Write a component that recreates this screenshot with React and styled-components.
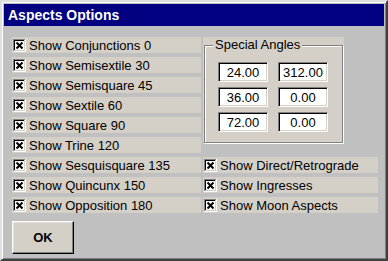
import React from 'react';
import styled, { createGlobalStyle } from 'styled-components';

const GlobalStyle = createGlobalStyle`
  html, body {
    margin: 0;
    padding: 0;
    background: #c0c0c0;
  }
  body {
    font-family: "Liberation Sans", Arial, sans-serif;
  }
`;

const Window = styled.div`
  width: 388px;
  height: 261px;
  box-sizing: border-box;
  background: #c0c0c0;
  border: 2px solid;
  border-color: #dfdfdf #404040 #404040 #dfdfdf;
  box-shadow: inset 1px 1px #fff, inset -1px -1px #808080;
  padding: 2px;
  display: flex;
  flex-direction: column;
`;

const TitleBar = styled.div`
  height: 22px;
  line-height: 22px;
  background: #000080;
  color: #fff;
  font-size: 14px;
  font-weight: 700;
  padding-left: 4px;
`;

const Body = styled.div`
  padding: 11px 0 0 8px;
  display: flex;
  flex-direction: column;
  align-items: flex-start;
`;

const Grid = styled.div`
  display: grid;
  grid-template-columns: 189px 175px;
  grid-auto-rows: 16px;
  column-gap: 2px;
  row-gap: 4px;
`;

const Row = styled.div`
  grid-column: ${p => p.$col};
  display: flex;
  align-items: center;
  gap: 3px;
  padding-left: 1px;
  background: #d4d0c8;
  color: #000;
  font-size: 13px;
  white-space: nowrap;
`;

const GroupWrap = styled.div`
  grid-column: 2;
  grid-row: 1 / span 6;
  align-self: start;
  width: 141px;
  height: 107px;
  box-sizing: border-box;
  padding: 0 1px 1px 1px;
  background: #d4d0c8;
`;

const GroupBox = styled.fieldset`
  margin: 0;
  height: 100%;
  box-sizing: border-box;
  border: 1px solid #808080;
  box-shadow: inset 1px 1px #fff, 1px 1px #fff;
  padding: 9px 0 0 13px;
`;

const Legend = styled.legend`
  margin-left: -5px;
  padding: 0 2px;
  line-height: 16px;
  font-size: 13px;
  color: #000;
  background: #d4d0c8;
`;

const AngleGrid = styled.div`
  display: grid;
  grid-template-columns: 50px 50px;
  column-gap: 10px;
  row-gap: 5px;
`;

const AngleInput = styled.input`
  width: 50px;
  height: 20px;
  box-sizing: border-box;
  margin: 0;
  padding: 0;
  border: 1px solid;
  border-color: #808080 #fff #fff #808080;
  box-shadow: inset 1px 1px #000, inset -1px -1px #d4d0c8;
  background: #fff;
  text-align: center;
  font-family: "Liberation Sans", Arial, sans-serif;
  font-size: 13px;
  color: #000;
  outline: none;
`;

const OkButton = styled.button`
  margin-top: 8px;
  width: 62px;
  height: 33px;
  box-sizing: border-box;
  background: #d4d0c8;
  border: 1px solid;
  border-color: #fff #000 #000 #fff;
  box-shadow: inset -1px -1px #808080, inset 1px 1px #dfdfdf;
  font-family: "Liberation Sans", Arial, sans-serif;
  font-size: 13px;
  font-weight: 700;
  color: #000;
  padding: 0;
`;

const CheckBox = () => (
  <svg width="13" height="13" viewBox="0 0 13 13" shapeRendering="crispEdges">
    <rect x="0" y="0" width="13" height="13" fill="#fff" />
    <rect x="0" y="0" width="12" height="1" fill="#808080" />
    <rect x="0" y="0" width="1" height="12" fill="#808080" />
    <rect x="1" y="1" width="10" height="1" fill="#000" />
    <rect x="1" y="1" width="1" height="10" fill="#000" />
    <rect x="1" y="11" width="11" height="1" fill="#d4d0c8" />
    <rect x="11" y="1" width="1" height="11" fill="#d4d0c8" />
    <path d="M3.5 3.5 L9.5 9.5 M9.5 3.5 L3.5 9.5" stroke="#000" strokeWidth="2" shapeRendering="auto" />
  </svg>
);

const leftItems = [
  'Show Conjunctions 0',
  'Show Semisextile 30',
  'Show Semisquare 45',
  'Show Sextile 60',
  'Show Square 90',
  'Show Trine 120',
  'Show Sesquisquare 135',
  'Show Quincunx 150',
  'Show Opposition 180',
];

const rightItems = ['Show Direct/Retrograde', 'Show Ingresses', 'Show Moon Aspects'];

const angles = ['24.00', '312.00', '36.00', '0.00', '72.00', '0.00'];

export default function App() {
  return (
    <>
      <GlobalStyle />
      <Window>
        <TitleBar>Aspects Options</TitleBar>
        <Body>
          <Grid>
            {leftItems.map((label, i) => (
              <Row key={label} $col={1} style={{ gridRow: i + 1 }}>
                <CheckBox />
                {label}
              </Row>
            ))}
            <GroupWrap>
              <GroupBox>
                <Legend>Special Angles</Legend>
                <AngleGrid>
                  {angles.map((a, i) => (
                    <AngleInput key={i} defaultValue={a} readOnly />
                  ))}
                </AngleGrid>
              </GroupBox>
            </GroupWrap>
            {rightItems.map((label, i) => (
              <Row key={label} $col={2} style={{ gridRow: i + 7 }}>
                <CheckBox />
                {label}
              </Row>
            ))}
          </Grid>
          <OkButton>OK</OkButton>
        </Body>
      </Window>
    </>
  );
}
